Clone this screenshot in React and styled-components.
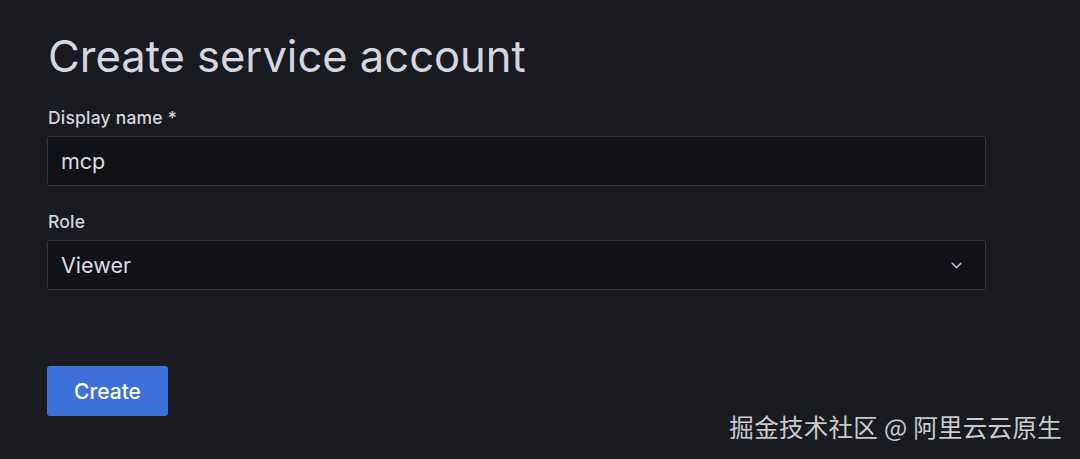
import React from "react";
import styled, { createGlobalStyle } from "styled-components";
import { ChevronDown } from "lucide-react";

const Global = createGlobalStyle`
  html, body {
    margin: 0;
    padding: 0;
    background: #1a1b20;
  }
  #root {
    min-height: 459px;
  }
`;

const Page = styled.div`
  position: relative;
  box-sizing: border-box;
  height: 459px;
  padding: 29px 0 0 47px;
  background: #1a1b20;
  font-family: Inter, "Noto Sans", sans-serif;
  color: #d0d0dc;
  overflow: hidden;
`;

const Title = styled.h1`
  margin: 0 0 24px 1px;
  font-size: 43.5px;
  font-weight: 400;
  line-height: 55px;
  color: #d6d6e0;
`;

const Form = styled.form`
  width: 939px;
  display: flex;
  flex-direction: column;
`;

const Field = styled.div`
  display: flex;
  flex-direction: column;
  margin-bottom: 26px;
`;

const Label = styled.label`
  font-size: 17.5px;
  font-weight: 500;
  letter-spacing: 0.2px;
  line-height: 20px;
  margin: 0 0 8px 1px;
  color: #d4d4de;
`;

const Box = styled.div`
  box-sizing: border-box;
  height: 50px;
  display: flex;
  align-items: center;
  justify-content: space-between;
  padding: 0 20px 0 13px;
  background: #111217;
  border: 1px solid #34353b;
  border-radius: 3px;
  font-size: 21.5px;
  color: #dcdce6;
`;

const Button = styled.button`
  align-self: flex-start;
  margin-top: 50px;
  width: 121px;
  height: 50px;
  border: none;
  border-radius: 3px;
  background: #3d71d9;
  color: #ffffff;
  font-family: Inter, "Noto Sans", sans-serif;
  font-size: 21px;
  font-weight: 500;
`;

const Watermark = styled.div`
  position: absolute;
  right: 18px;
  bottom: 15px;
  font-family: "Noto Sans CJK SC", "Noto Sans", sans-serif;
  font-size: 24.5px;
  color: rgba(235, 235, 240, 0.85);
  letter-spacing: 0.3px;
`;

export default function App() {
  return (
    <>
      <Global />
      <Page>
        <Title>Create service account</Title>
        <Form onSubmit={(e) => e.preventDefault()}>
          <Field>
            <Label>Display name *</Label>
            <Box>mcp</Box>
          </Field>
          <Field>
            <Label>Role</Label>
            <Box>
              Viewer
              <ChevronDown size={17} strokeWidth={2.2} color="#b8b8c4" />
            </Box>
          </Field>
          <Button type="submit">Create</Button>
        </Form>
        <Watermark>掘金技术社区 @ 阿里云云原生</Watermark>
      </Page>
    </>
  );
}
